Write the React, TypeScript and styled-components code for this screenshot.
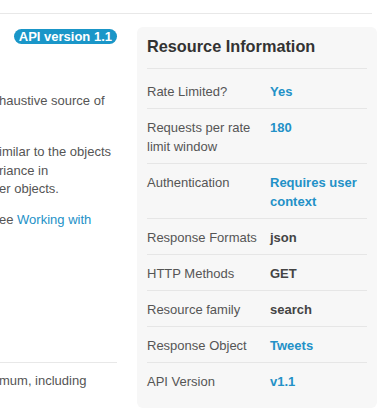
import styled, { createGlobalStyle } from 'styled-components';

const GlobalStyle = createGlobalStyle`
  html, body {
    margin: 0;
    padding: 0;
    background: #fff;
  }
  body {
    font-family: "Liberation Sans", Arial, sans-serif;
    font-size: 13px;
    color: #555;
    overflow: hidden;
  }
`;

const Page = styled.div`
  width: 385px;
  height: 416px;
  overflow: hidden;
  padding-top: 13px;
  box-sizing: border-box;
`;

const TopRule = styled.div`
  width: 372px;
  border-top: 1px solid #e8e8e8;
`;

const Columns = styled.div`
  display: flex;
  align-items: flex-start;
  gap: 20px;
  margin-top: 13px;
`;

const Main = styled.div`
  width: 117px;
  flex: none;
  display: flex;
  flex-direction: column;
`;

const Badge = styled.span`
  align-self: flex-end;
  margin-top: 2px;
  padding: 0 5px;
  height: 15px;
  line-height: 15px;
  border-radius: 8px;
  background: #1a96c8;
  color: #fff;
  font-weight: bold;
  font-size: 13px;
  white-space: nowrap;
`;

const Paragraph = styled.p<{ $top: number }>`
  margin: ${(p) => p.$top}px 0 0 0;
  line-height: 18.5px;
  white-space: nowrap;
`;

const Line = styled.span`
  display: block;
  margin-left: -1px;
`;

const Link = styled.a`
  color: #2391c7;
  text-decoration: none;
`;

const Divider = styled.div`
  border-top: 1px solid #e8e8e8;
  margin-top: 114px;
`;

const Sidebar = styled.aside`
  width: 240px;
  flex: none;
  background: #f7f7f7;
  border-radius: 6px;
  padding: 0 10px 10px 10px;
  box-sizing: border-box;
`;

const SidebarTitle = styled.h3`
  margin: 0;
  padding: 9px 0 12px 0;
  font-size: 16.3px;
  line-height: 20px;
  font-weight: bold;
  color: #333;
  border-bottom: 1px solid #e6e6e6;
`;

const Table = styled.div`
  display: flex;
  flex-direction: column;
  padding-top: 4px;
`;

const Row = styled.div`
  display: grid;
  grid-template-columns: 123px 1fr;
  padding: 8.5px 0 7.5px 0;
  line-height: 19px;
  border-bottom: 1px solid #e6e6e6;

  &:last-child {
    border-bottom: none;
  }
`;

const Label = styled.div`
  color: #555;
`;

const Value = styled.div<{ $link?: boolean }>`
  font-weight: bold;
  color: ${(p) => (p.$link ? '#2391c7' : '#444')};
`;

const resourceInfo = [
  { label: 'Rate Limited?', value: 'Yes', link: true },
  { label: 'Requests per rate limit window', value: '180', link: true },
  { label: 'Authentication', value: 'Requires user context', link: true },
  { label: 'Response Formats', value: 'json' },
  { label: 'HTTP Methods', value: 'GET' },
  { label: 'Resource family', value: 'search' },
  { label: 'Response Object', value: 'Tweets', link: true },
  { label: 'API Version', value: 'v1.1', link: true },
];

export default function App() {
  return (
    <>
      <GlobalStyle />
      <Page>
        <TopRule />
        <Columns>
          <Main>
            <Badge>API version 1.1</Badge>
            <Paragraph $top={48}>
              <Line>haustive source of</Line>
              <Line>&nbsp;</Line>
            </Paragraph>
            <Paragraph $top={14}>
              <Line>imilar to the objects</Line>
              <Line>riance in</Line>
              <Line>er objects.</Line>
            </Paragraph>
            <Paragraph $top={12}>
              <Line>
                ee <Link href="#">Working with</Link>
              </Line>
              <Line>&nbsp;</Line>
            </Paragraph>
            <Divider />
            <Paragraph $top={9}>
              <Line>mum, including</Line>
            </Paragraph>
          </Main>
          <Sidebar>
            <SidebarTitle>Resource Information</SidebarTitle>
            <Table>
              {resourceInfo.map((row) => (
                <Row key={row.label}>
                  <Label>{row.label}</Label>
                  <Value $link={row.link}>{row.value}</Value>
                </Row>
              ))}
            </Table>
          </Sidebar>
        </Columns>
      </Page>
    </>
  );
}
